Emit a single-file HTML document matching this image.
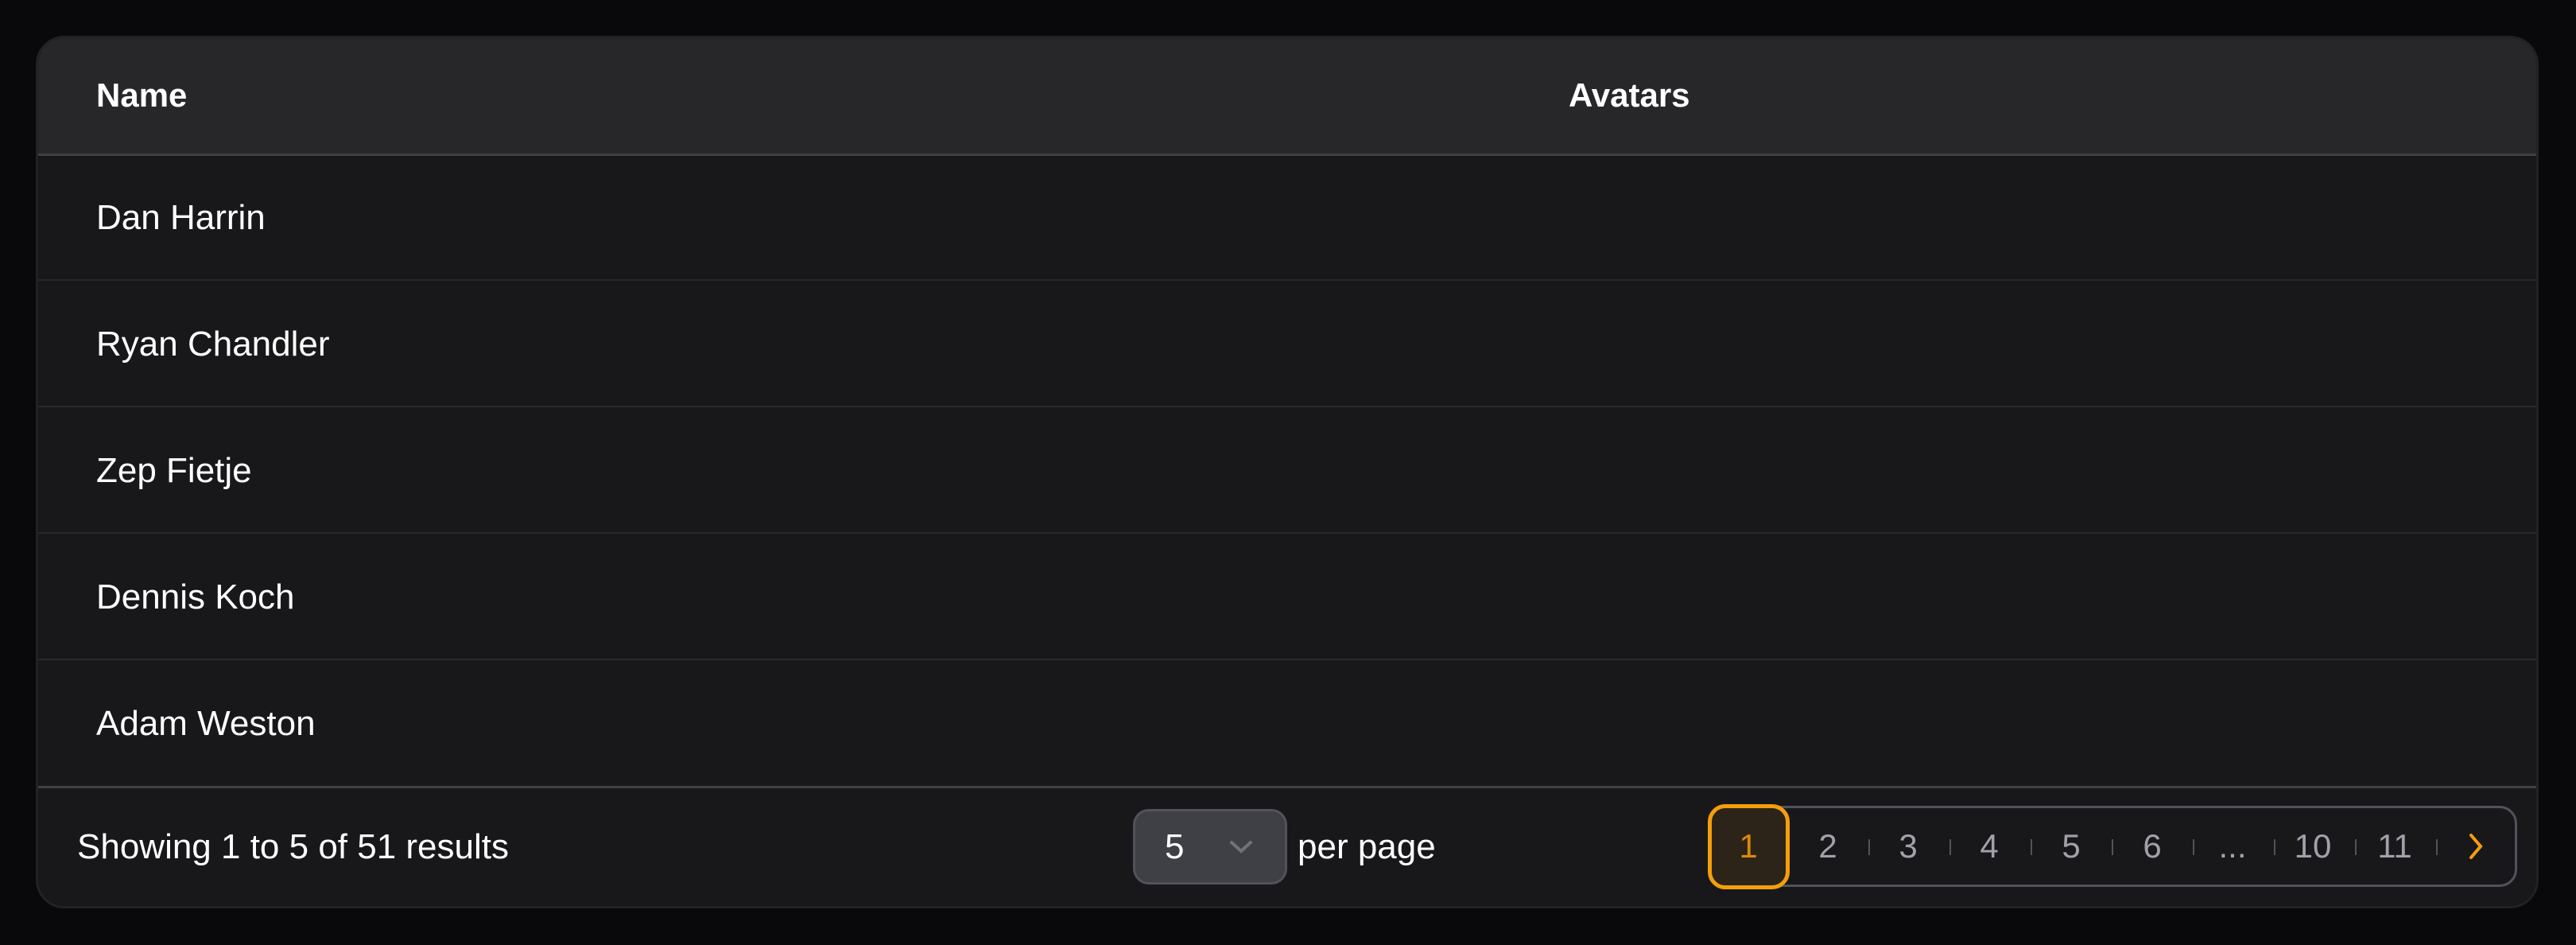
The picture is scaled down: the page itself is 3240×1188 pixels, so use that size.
<!DOCTYPE html>
<html><head><style>
*{margin:0;padding:0;box-sizing:border-box}
body{width:3240px;height:1188px;background:#09090b;font-family:"Liberation Sans",sans-serif;color:#fff;position:relative;overflow:hidden}
.card{position:absolute;left:45px;top:45px;width:3148px;height:1097px;background:#18181b;border-radius:36px;border:3px solid #222226;overflow:hidden}
.hdr{position:absolute;left:0;top:0;right:0;height:148px;background:#27272a;border-bottom:3px solid #3f3f46}
.t{position:absolute;font-size:44px;line-height:1;white-space:nowrap}
.row{position:absolute;left:0;right:0;height:2px;background:#2a2a2e}
.pag{position:absolute;left:2148px;top:1013px;width:1018px;height:102px;border:3px solid #52525b;border-radius:22px}
.act{position:absolute;left:2148px;top:1011px;width:103px;height:107px;border:5px solid #f59e0b;border-radius:22px;background:#2c2418}
.n{position:absolute;top:1043px;font-size:42px;line-height:1;color:#a1a1aa;transform:translateX(-50%)}
.sep{position:absolute;top:1055px;width:2px;height:20px;background:#52525b}
</style></head><body>
<div class="card">
<div class="hdr"></div>
<div class="row" style="top:303px"></div>
<div class="row" style="top:462px"></div>
<div class="row" style="top:621px"></div>
<div class="row" style="top:780px"></div>
<div class="row" style="top:940px;height:3px;background:#3f3f46"></div>
</div>
<div class="t" style="left:121px;top:99px;font-weight:bold;font-size:42px">Name</div>
<div class="t" style="left:1973px;top:99px;font-weight:bold;font-size:42px">Avatars</div>
<div class="t" style="left:121px;top:252px">Dan Harrin</div>
<div class="t" style="left:121px;top:411px">Ryan Chandler</div>
<div class="t" style="left:121px;top:570px">Zep Fietje</div>
<div class="t" style="left:121px;top:729px">Dennis Koch</div>
<div class="t" style="left:121px;top:888px">Adam Weston</div>
<div class="t" style="left:97px;top:1043px">Showing 1 to 5 of 51 results</div>
<div style="position:absolute;left:1425px;top:1017px;width:194px;height:95px;background:#3f3f46;border:3px solid #52525b;border-radius:20px"></div>
<div class="t" style="left:1465px;top:1043px">5</div>
<svg style="position:absolute;left:1545px;top:1055px" width="32" height="20" viewBox="0 0 32 20"><path d="M4 4 L16 15 L28 4" stroke="#71717a" stroke-width="4" fill="none" stroke-linecap="round"/></svg>
<div class="t" style="left:1632px;top:1043px">per page</div>
<div class="pag"></div>
<div class="act"></div>
<div class="n" style="left:2199px;color:#d98a0b">1</div>
<div class="n" style="left:2299px">2</div>
<div class="n" style="left:2400px">3</div>
<div class="n" style="left:2502px">4</div>
<div class="n" style="left:2605px">5</div>
<div class="n" style="left:2707px">6</div>
<div class="n" style="left:2808px">...</div>
<div class="n" style="left:2909px">10</div>
<div class="n" style="left:3012px">11</div>
<svg style="position:absolute;left:3102px;top:1046px" width="24" height="36" viewBox="0 0 24 36"><path d="M6 4 L18 18 L6 32" stroke="#f59e0b" stroke-width="4" fill="none" stroke-linecap="round"/></svg>
<div class="sep" style="left:2350px"></div>
<div class="sep" style="left:2452px"></div>
<div class="sep" style="left:2554px"></div>
<div class="sep" style="left:2656px"></div>
<div class="sep" style="left:2758px"></div>
<div class="sep" style="left:2860px"></div>
<div class="sep" style="left:2962px"></div>
<div class="sep" style="left:3064px"></div>
</body></html>
